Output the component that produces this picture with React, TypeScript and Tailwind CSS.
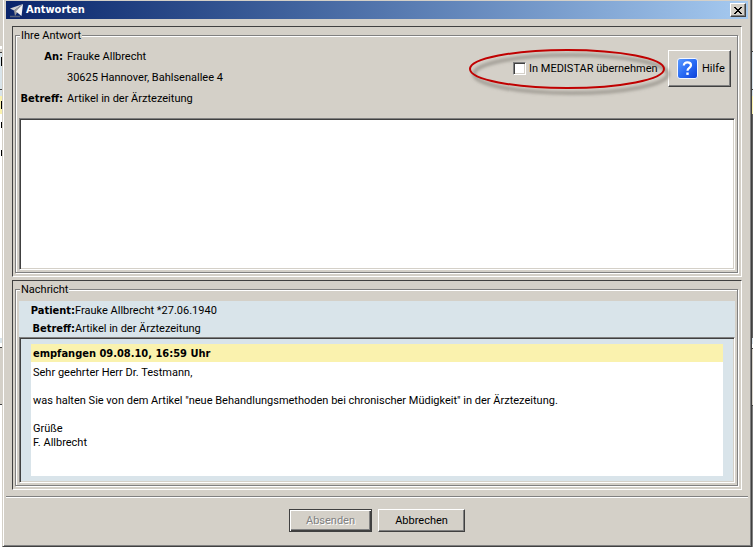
import type { ReactNode } from 'react';
import { useState } from 'react';

type Strip = { height: string; color: string };

// Schmale Streifen des Fensters, das hinter dem Dialog liegt
const leftStrips: Strip[] = [
    { height: 'h-[46px]', color: 'bg-[#d4d0c8]' },
    { height: 'h-[3px]', color: 'bg-white' },
    { height: 'h-[3px]', color: 'bg-[#d4d0c8]' },
    { height: 'h-px', color: 'bg-[#404040]' },
    { height: 'h-[4px]', color: 'bg-[#d9e4ea]' },
    { height: 'h-[9px]', color: 'bg-[#d9e4ea] border-r border-black' },
    { height: 'h-[23px]', color: 'bg-[#d9e4ea]' },
    { height: 'h-px', color: 'bg-[#404040]' },
    { height: 'h-[6px]', color: 'bg-[#d9e4ea]' },
    { height: 'h-[5px]', color: 'bg-[#faf2ae]' },
    { height: 'h-[8px]', color: 'bg-[#faf2ae] border-r border-black' },
    { height: 'h-[5px]', color: 'bg-[#faf2ae]' },
    { height: 'h-[8px]', color: 'bg-white' },
    { height: 'h-[6px]', color: 'bg-white border-r border-black' },
    { height: 'h-[22px]', color: 'bg-white' },
    { height: 'h-[6px]', color: 'bg-white border-r border-black' },
    { height: 'h-[182px]', color: 'bg-white' },
    { height: 'h-[5px]', color: 'bg-[#d9e4ea]' },
    { height: 'h-[4px]', color: 'bg-white' },
    { height: 'h-px', color: 'bg-[#404040]' },
    { height: 'h-[56px]', color: 'bg-[#d4d0c8]' },
    { height: 'h-px', color: 'bg-[#404040]' },
];

const rightStrips: Strip[] = [
    { height: 'h-[51px]', color: 'bg-[#d4d0c8]' },
    { height: 'h-px', color: 'bg-[#404040]' },
    { height: 'h-[37px]', color: 'bg-[#d9e4ea]' },
    { height: 'h-px', color: 'bg-[#404040]' },
    { height: 'h-[6px]', color: 'bg-[#d9e4ea]' },
    { height: 'h-[18px]', color: 'bg-[#faf2ae]' },
    { height: 'h-[224px]', color: 'bg-[#606060]' },
    { height: 'h-[6px]', color: 'bg-[#d9e4ea]' },
    { height: 'h-[4px]', color: 'bg-white' },
    { height: 'h-px', color: 'bg-[#404040]' },
    { height: 'h-[56px]', color: 'bg-[#d4d0c8]' },
    { height: 'h-px', color: 'bg-[#404040]' },
];

const Backdrop = ({ strips, className, rest }: { strips: Strip[]; className: string; rest: string }) => (
    <div className={`flex shrink-0 flex-col ${className}`} aria-hidden="true">
        {strips.map((strip, index) => (
            <div key={index} className={`${strip.height} ${strip.color}`} />
        ))}
        <div className={`flex-1 ${rest}`} />
    </div>
);

const PlaneIcon = () => (
    <svg width="16" height="16" viewBox="0 0 16 16" aria-hidden="true">
        <path d="M0 14.500h10" stroke="#55607a" strokeWidth="1.500" />
        <path d="M13 2 0 6.500 4 8.500z" fill="#d0d0d0" />
        <path d="M13 2 4 8.500 5 14 7.500 10z" fill="#9a9a9a" />
        <path d="M13 2 6 9.500 11.500 14z" fill="#f4f4f4" />
    </svg>
);

const HelpIcon = () => (
    <svg width="21" height="21" viewBox="0 0 21 21" aria-hidden="true">
        <defs>
            <linearGradient id="help" x1="0" y1="0" x2="1" y2="1">
                <stop offset="0" stopColor="#5c9bff" />
                <stop offset="0.500" stopColor="#2a6cf5" />
                <stop offset="1" stopColor="#0c3fd8" />
            </linearGradient>
        </defs>
        <rect x="0.500" y="0.500" width="20" height="20" rx="2.500" fill="url(#help)" stroke="#f4f7ff" />
        <path d="M6.800 7.400C6.800 3.200 14 3.400 14 7.300C14 9.900 10.500 9.900 10.500 12.800" fill="none" stroke="#fff" strokeWidth="2.200" />
        <rect x="9.300" y="14.500" width="2.400" height="2.400" fill="#fff" />
    </svg>
);

const Panel = ({ title, className = '', children }: { title: string; className?: string; children: ReactNode }) => (
    <div className={`flex flex-col border border-t-[#404040] border-r-white border-b-white border-l-[#404040] px-[2px] pb-[2px] ${className}`}>
        <fieldset className="mr-px mb-px flex min-w-0 flex-1 flex-col border border-[#808080] pr-[2px] pb-[2px] pl-[3px] shadow-[inset_1px_1px_#fff,1px_1px_#fff]">
            <legend className="ml-px bg-[#d4d0c8] px-px pt-[2px]">{title}</legend>
            {children}
        </fieldset>
    </div>
);

const raised =
    'border border-t-white border-l-white border-r-[#404040] border-b-[#404040] shadow-[inset_-1px_-1px_#808080]';
const sunken =
    'border border-t-[#808080] border-l-[#808080] border-r-white border-b-white shadow-[inset_1px_1px_#404040,inset_-1px_-1px_#d4d0c8]';
const strong = "font-['DejaVu_Sans_Condensed','DejaVu_Sans',sans-serif] font-bold";

const App = () => {
    const [answer, setAnswer] = useState('');

    return (
        <div className="flex min-h-screen bg-white font-[Roboto,'Liberation_Sans',sans-serif] text-[11px] leading-[14px] text-black">
            <Backdrop strips={leftStrips} className="w-[2px]" rest="bg-white" />
            <div
                role="dialog"
                aria-labelledby="dialog-title"
                className="flex min-w-0 flex-1 flex-col border-r border-b border-l border-l-[#d4d0c8] border-r-[#404040] border-b-[#404040] bg-[#d4d0c8] px-[3px] pt-px shadow-[inset_1px_0_#fff,inset_-1px_-1px_#808080]"
            >
                <header className="flex h-[18px] shrink-0 items-center bg-linear-to-r from-[#0a246a] to-[#a6caf0] pr-[2px] pl-[4px] text-white">
                    <PlaneIcon />
                    <h1 id="dialog-title" className={`flex-1 ${strong}`}>
                        Antworten
                    </h1>
                    <button type="button" aria-label="Schließen" className={`flex h-[14px] w-[16px] items-center justify-center bg-[#d4d0c8] ${raised}`}>
                        <svg width="8" height="7" viewBox="0 0 8 7" shapeRendering="crispEdges" aria-hidden="true">
                            <path d="M0 0h2v1h1v1h2V1h1V0h2v1H7v1H6v1H5v1h1v1h1v1h1v1H6V6H5V5H3v1H2v1H0V6h1V5h1V4h1V3H2V2H1V1H0z" />
                        </svg>
                    </button>
                </header>

                <main className="flex flex-1 flex-col gap-[3px] px-[6px] pt-[7px] pb-[6px]">
                    <Panel title="Ihre Antwort">
                        <div className="flex justify-between pt-[7px]">
                            <dl className="grid grid-cols-[44px_1fr] gap-x-[4px] gap-y-[7px]">
                                <dt className={`text-right ${strong}`}>An:</dt>
                                <dd>Frauke Allbrecht</dd>
                                <dd className="col-start-2">30625 Hannover, Bahlsenallee 4</dd>
                                <dt className={`text-right ${strong}`}>Betreff:</dt>
                                <dd>Artikel in der Ärztezeitung</dd>
                            </dl>
                            <div className="flex h-[37px] items-center pr-[4px]">
                                <div className="relative flex w-[155px] items-center">
                                    {/* Rote Markierung um die Option */}
                                    <svg className="pointer-events-none absolute -top-[15px] -left-[48px]" width="212" height="56" viewBox="0 0 212 56" aria-hidden="true">
                                        <defs>
                                            <filter id="soft" x="-10%" y="-20%" width="120%" height="150%">
                                                <feGaussianBlur stdDeviation="1.500" />
                                            </filter>
                                        </defs>
                                        <ellipse cx="106" cy="27" rx="97" ry="19" fill="none" stroke="#77736c" strokeOpacity="0.500" strokeWidth="4" filter="url(#soft)" />
                                        <ellipse cx="102" cy="22" rx="97" ry="19" fill="none" stroke="#c00000" strokeWidth="2" />
                                    </svg>
                                    <input id="takeover" type="checkbox" className={`h-[13px] w-[13px] appearance-none bg-white checked:bg-[#404040] ${sunken}`} />
                                    <label htmlFor="takeover" className="pl-[3px] whitespace-nowrap">
                                        In MEDISTAR übernehmen
                                    </label>
                                </div>
                                <button type="button" className={`flex h-[37px] w-[63px] items-center gap-[4px] pl-[8px] ${raised}`}>
                                    <HelpIcon />
                                    Hilfe
                                </button>
                            </div>
                        </div>
                        <textarea
                            aria-label="Ihre Antwort"
                            value={answer}
                            onChange={(event) => setAnswer(event.target.value)}
                            className={`mt-[12px] block h-[152px] w-full resize-none bg-white p-[4px] outline-none ${sunken}`}
                        />
                    </Panel>

                    <Panel title="Nachricht" className="flex-1">
                        <div className="mt-[4px] bg-[#d9e4ea] pt-[3px] pb-px">
                            <dl className="grid grid-cols-[56px_1fr] gap-y-[4px]">
                                <dt className={`text-right ${strong}`}>Patient:</dt>
                                <dd>Frauke Allbrecht *27.06.1940</dd>
                                <dt className={`text-right ${strong}`}>Betreff:</dt>
                                <dd>Artikel in der Ärztezeitung</dd>
                            </dl>
                        </div>
                        <div className={`flex flex-1 flex-col bg-[#d9e4ea] px-[11px] pt-[6px] pb-[6px] ${sunken}`}>
                            <h2 className={`bg-[#faf2ae] px-[2px] pt-[3px] pb-px ${strong}`}>empfangen 09.08.10, 16:59 Uhr</h2>
                            <div className="flex flex-1 flex-col gap-[14px] bg-white px-[2px] pt-[4px]">
                                <p>Sehr geehrter Herr Dr. Testmann,</p>
                                <p>was halten Sie von dem Artikel "neue Behandlungsmethoden bei chronischer Müdigkeit" in der Ärztezeitung.</p>
                                <p>
                                    Grüße
                                    <br />
                                    F. Allbrecht
                                </p>
                            </div>
                        </div>
                    </Panel>
                </main>

                <footer className="flex justify-center gap-[6px] border-t border-[#808080] pt-[12px] pb-[14px] shadow-[inset_0_1px_#fff]">
                    <button
                        type="button"
                        disabled
                        className="h-[23px] w-[83px] border border-[#404040] text-[#808080] shadow-[inset_1px_1px_#fff,inset_-1px_-1px_#404040,inset_-2px_-2px_#808080] [text-shadow:1px_1px_#fff]"
                    >
                        Absenden
                    </button>
                    <button type="button" className={`h-[23px] w-[87px] ${raised}`}>
                        Abbrechen
                    </button>
                </footer>
            </div>
            <Backdrop strips={rightStrips} className="w-px" rest="bg-[#808080]" />
        </div>
    );
};

export default App;
